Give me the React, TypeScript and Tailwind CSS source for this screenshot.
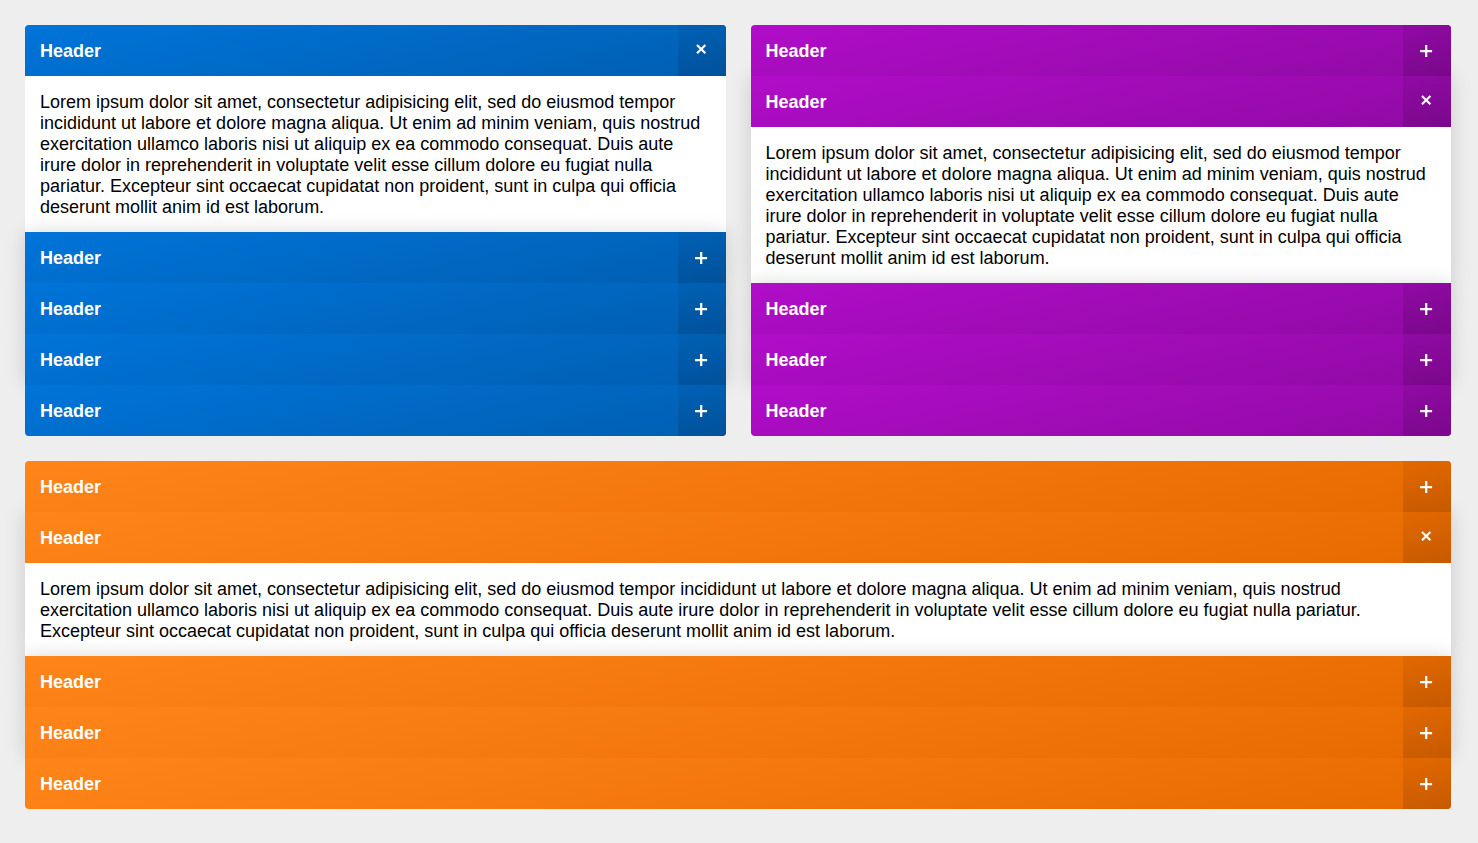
import { useState } from "react";

const LOREM =
  "Lorem ipsum dolor sit amet, consectetur adipisicing elit, sed do eiusmod tempor incididunt ut labore et dolore magna aliqua. Ut enim ad minim veniam, quis nostrud exercitation ullamco laboris nisi ut aliquip ex ea commodo consequat. Duis aute irure dolor in reprehenderit in voluptate velit esse cillum dolore eu fugiat nulla pariatur. Excepteur sint occaecat cupidatat non proident, sunt in culpa qui officia deserunt mollit anim id est laborum.";

const themes = {
  blue: {
    header: "bg-[linear-gradient(168deg,#0074d9,#005fb2)]",
    toggle: "bg-[linear-gradient(168deg,#0061b5,#00519a)]",
  },
  purple: {
    header: "bg-[linear-gradient(168deg,#b10dc9,#900aa4)]",
    toggle: "bg-[linear-gradient(168deg,#900aa4,#7a088b)]",
  },
  orange: {
    header: "bg-[linear-gradient(168deg,#ff851b,#e76a00)]",
    toggle: "bg-[linear-gradient(168deg,#e36800,#c65a00)]",
  },
};

type AccordionProps = {
  id: string;
  theme: keyof typeof themes;
  initial: number;
  className?: string;
};

function Accordion({ id, theme, initial, className = "" }: AccordionProps) {
  const [open, setOpen] = useState(initial);
  const colors = themes[theme];
  return (
    <div className={`min-w-0 ${className}`}>
      {[0, 1, 2, 3, 4].map((i) => {
        const active = open === i;
        const edge = i === 0 ? "rounded-t" : i === 4 ? "rounded-b" : "shadow-[0_0_20px_rgba(0,0,0,0.15)]";
        const corner = i === 0 ? "rounded-t" : i === 4 && !active ? "rounded-b" : "";
        return (
          <section key={i} className={edge}>
            <h2 className="relative z-10">
              <button
                type="button"
                aria-expanded={active}
                aria-controls={`${id}-panel-${i}`}
                onClick={() => setOpen(active ? -1 : i)}
                className={`flex w-full cursor-pointer items-stretch justify-between overflow-hidden text-left font-bold text-white ${corner} ${colors.header}`}
              >
                <span className="px-[15px] pt-4 pb-3.5">Header</span>
                <span className={`flex w-12 items-center justify-center pr-0.5 ${colors.toggle}`}>
                  <svg viewBox="0 0 14 15" className="h-[15px] w-3.5" stroke="white" strokeWidth="2.2" fill="none" aria-hidden="true">
                    {active ? <path d="M3 2L11.4 10.2M11.4 2L3 10.2" /> : <path d="M7.2 2V14M1.1 8.2H13.1" />}
                  </svg>
                </span>
              </button>
            </h2>
            <div id={`${id}-panel-${i}`} hidden={!active} className="bg-white px-[15px] pt-4 pb-3.5">
              {LOREM}
            </div>
          </section>
        );
      })}
    </div>
  );
}

export default function App() {
  return (
    <main className="grid min-h-screen grid-cols-2 content-start gap-[25px] bg-[#eee] py-[25px] pr-[27px] pl-[25px] font-['Liberation_Sans',Arial,sans-serif] text-[18px] leading-[21px] text-black">
      <Accordion id="blue" theme="blue" initial={0} />
      <Accordion id="purple" theme="purple" initial={1} />
      <Accordion id="orange" theme="orange" initial={1} className="col-span-2" />
    </main>
  );
}
